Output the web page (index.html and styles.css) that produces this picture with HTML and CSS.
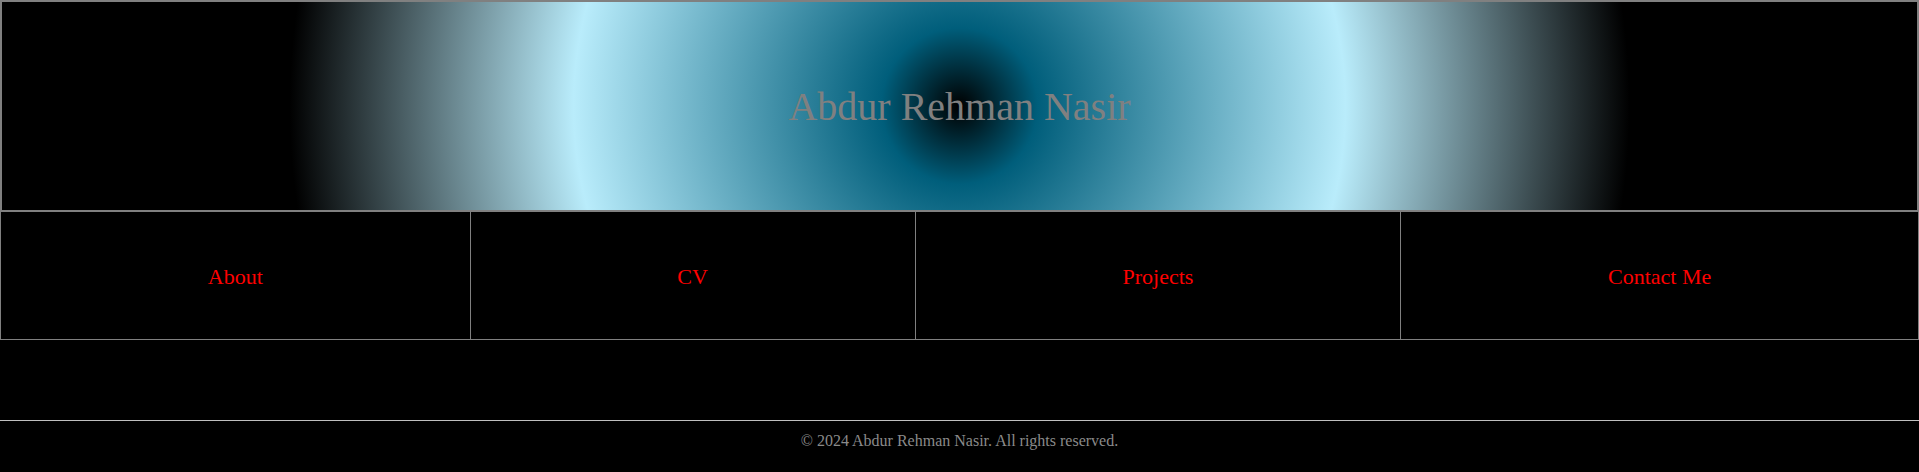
FILE: index.html
```html
<!DOCTYPE html>
<html lang="en">
<head>
<meta charset="utf-8">
<title>Abdur Rehman Nasir</title>
<link rel="stylesheet" href="styles.css">
</head>
<body>
<header class="site-header">
  <h1 class="site-title">Abdur Rehman Nasir</h1>
</header>
<nav class="site-nav">
  <a class="nav-item" href="#about">About</a>
  <a class="nav-item" href="#cv">CV</a>
  <a class="nav-item" href="#projects">Projects</a>
  <a class="nav-item" href="#contact">Contact Me</a>
</nav>
<main class="site-main"></main>
<footer class="site-footer">
  <p class="footer-text">&copy; 2024 Abdur Rehman Nasir. All rights reserved.</p>
</footer>
</body>
</html>
```
FILE: styles.css
```css
html, body {
  margin: 0;
  padding: 0;
  background: #000;
}

body {
  font-family: "Liberation Serif", "Times New Roman", serif;
  color: #808080;
}

.site-header {
  border: 2px solid #808080;
  height: 208px;
  display: flex;
  align-items: center;
  justify-content: center;
  background: radial-gradient(circle at 50% 50%,
    #000 0px,
    #005e7b 78px,
    #b9ecfb 386px,
    #000 670px);
}

.site-title {
  margin: 0;
  font-weight: normal;
  font-size: 40px;
  color: #808080;
}

.site-nav {
  display: flex;
  border-left: 1px solid #808080;
}

.nav-item {
  flex: 1 1 auto;
  height: 125px;
  padding-top: 2px;
  display: flex;
  align-items: center;
  justify-content: center;
  border-right: 1px solid #808080;
  border-bottom: 1px solid #808080;
  color: #ff0000;
  font-size: 22px;
  text-decoration: none;
  white-space: nowrap;
}

.site-main {
  padding: 40px 0;
}

.site-footer {
  border-top: 1px solid #c0c0c0;
  padding: 11px 0 9px;
  text-align: center;
}

.footer-text {
  margin: 0;
  font-size: 16px;
  color: #8a8a8a;
}
```
